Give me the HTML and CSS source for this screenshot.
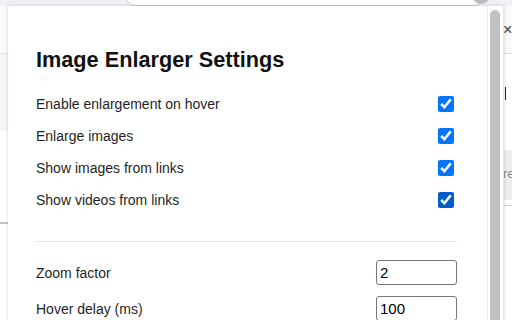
FILE: index.html
```html
<!DOCTYPE html>
<html>
<head>
<meta charset="utf-8">
<link rel="stylesheet" href="styles.css">
</head>
<body>
<div class="page">
  <div class="tabstrip">
    <div class="omnibox"></div>
    <div class="avatar"></div>
  </div>
  <div class="toolbar">
    <span class="close">×</span>
  </div>
  <div class="pagebody">
    <div class="left-band"></div>
    <div class="left-line"></div>
    <div class="right-cursor"></div>
    <div class="right-box"><span class="right-text">re</span></div>
    <div class="right-line"></div>
  </div>
</div>

<div class="popup">
  <div class="panel">
    <h1 class="title">Image Enlarger Settings</h1>
    <div class="options">
      <label class="row"><span>Enable enlargement on hover</span><input type="checkbox" checked></label>
      <label class="row"><span>Enlarge images</span><input type="checkbox" checked></label>
      <label class="row"><span>Show images from links</span><input type="checkbox" checked></label>
      <label class="row"><span>Show videos from links</span><input class="hovered" type="checkbox" checked></label>
    </div>
    <hr class="divider">
    <div class="fields">
      <label class="field"><span>Zoom factor</span><input class="num" type="text" value="2"></label>
      <label class="field"><span>Hover delay (ms)</span><input class="num" type="text" value="100"></label>
    </div>
  </div>
  <div class="scrolltrack"><div class="thumb"></div></div>
</div>
</body>
</html>
```

FILE: styles.css
```css
html, body {
  margin: 0;
  padding: 0;
  width: 512px;
  height: 320px;
  overflow: hidden;
  font-family: "Liberation Sans", Arial, sans-serif;
  background: #ffffff;
}

.page {
  position: relative;
  width: 512px;
  height: 320px;
}

.tabstrip {
  height: 6px;
  background: #eef0f5;
  position: relative;
  overflow: hidden;
}

.omnibox {
  position: absolute;
  left: 124px;
  top: -20px;
  width: 360px;
  height: 24px;
  background: #ffffff;
  border: 1px solid #c9cbd1;
  border-radius: 12px;
}

.avatar {
  position: absolute;
  left: 472px;
  top: -14px;
  width: 18px;
  height: 18px;
  border-radius: 50%;
  background: #b9bbc0;
}

.toolbar {
  height: 47px;
  background: #f8f9fb;
  border-bottom: 1px solid #dcdee2;
  position: relative;
}

.close {
  position: absolute;
  left: 503px;
  top: 14px;
  font-size: 16px;
  color: #3c4043;
  line-height: 20px;
}

.pagebody {
  position: relative;
  height: 266px;
}

.left-band {
  position: absolute;
  left: 0;
  top: 0;
  width: 8px;
  height: 77px;
  background: #f4f5f8;
}

.left-line {
  position: absolute;
  left: 0;
  top: 168px;
  width: 8px;
  height: 2px;
  background: #c4c4c6;
}

.right-cursor {
  position: absolute;
  left: 505px;
  top: 33px;
  width: 1px;
  height: 13px;
  background: #202124;
}

.right-box {
  position: absolute;
  left: 504px;
  top: 96px;
  width: 8px;
  height: 50px;
  background: #ededed;
  overflow: hidden;
}

.right-text {
  position: absolute;
  left: -1px;
  top: 16px;
  font-size: 13px;
  color: #8a8a8a;
}

.right-line {
  position: absolute;
  left: 504px;
  top: 151px;
  width: 8px;
  height: 1px;
  background: #d0d0d0;
}

/* Popup window */
.popup {
  position: absolute;
  left: 8px;
  top: 6px;
  width: 496px;
  height: 330px;
  display: flex;
  background: #ffffff;
  box-shadow: 0 0 3px rgba(0, 0, 0, 0.18);
  border-right: 1px solid #e6e6e6;
  box-sizing: border-box;
}

.panel {
  width: 480px;
  padding: 42px 27px 0 28px;
  box-sizing: border-box;
  border-right: 1px solid #ececec;
  color: #1f1f1f;
}

.title {
  margin: 0 0 16px 0;
  font-size: 21.7px;
  font-weight: bold;
  line-height: 24px;
  color: #111111;
}

.options {
  display: flex;
  flex-direction: column;
}

.row {
  height: 32px;
  display: flex;
  align-items: center;
  justify-content: space-between;
  font-size: 14px;
}

.row input {
  width: 16px;
  height: 16px;
  margin: 0 6px 0 0;
  accent-color: #0075ff;
}

.row input.hovered {
  accent-color: #005cc8;
}

.divider {
  margin: 25px 3px 18px 0;
  border: 0;
  height: 1px;
  background: #e6e6e6;
}

.fields {
  display: flex;
  flex-direction: column;
  gap: 11px;
}

.field {
  height: 25px;
  display: flex;
  align-items: center;
  justify-content: space-between;
  font-size: 14px;
}

.num {
  width: 81px;
  height: 25px;
  box-sizing: border-box;
  margin-right: 3px;
  padding: 1px 3px;
  border: 1px solid #767676;
  border-radius: 3px;
  font-family: "Liberation Sans", Arial, sans-serif;
  font-size: 15px;
  color: #000000;
  background: #ffffff;
}

.scrolltrack {
  width: 15px;
  padding: 4px 3px 0 2px;
  box-sizing: border-box;
  background: #ffffff;
}

.thumb {
  width: 10px;
  height: 400px;
  background: #c1c1c1;
  border-radius: 5px;
}
```
